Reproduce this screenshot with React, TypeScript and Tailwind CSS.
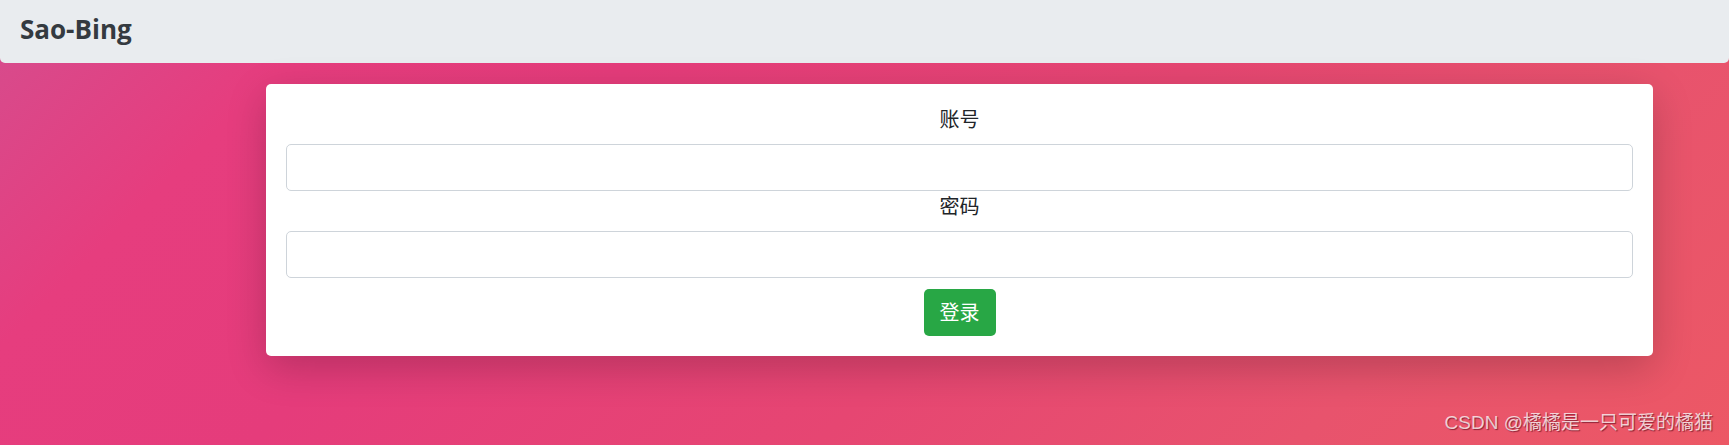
import React from "react";

function Field({ label, type }: { label: string; type: string }) {
  return (
    <div className="flex flex-col">
      <label className="mb-2 flex h-[32px] items-center justify-center text-[20px] text-[#212529]">
        {label}
      </label>
      <input
        type={type}
        className="h-[47px] w-full rounded-[5px] border border-[#ced4da] bg-white px-3 outline-none"
      />
    </div>
  );
}

export default function App() {
  return (
    <div className="relative h-[445px] w-full overflow-hidden bg-[linear-gradient(-45deg,#ec5865_0%,#e8536d_20%,#e64672_42%,#e53c7b_68%,#e63d7e_84%,#d54d8e_100%)] font-['Open_Sans','Noto_Sans_CJK_SC',sans-serif]">
      <nav className="flex h-[63px] items-center rounded-b-[5px] bg-[#e9ecef] px-5 pb-1">
        <span className="text-[26px] font-bold text-[#343a40]">Sao-Bing</span>
      </nav>

      <div className="pl-[266px] pr-[76px] pt-[21px]">
        <form className="flex flex-col rounded-[5px] bg-white p-5 shadow-[0_12px_40px_rgba(0,0,0,0.2)]">
          <Field label="账号" type="text" />
          <Field label="密码" type="password" />
          <div className="mt-[11px] flex justify-center">
            <button
              type="button"
              className="h-[47px] w-[72px] rounded-[5px] bg-[#28a745] text-[20px] text-white"
            >
              登录
            </button>
          </div>
        </form>
      </div>

      <div className="absolute bottom-[8px] right-[16px] font-['Liberation_Sans','Noto_Sans_CJK_SC',sans-serif] text-[19px] text-white/75 [text-shadow:1px_1px_1px_rgba(80,0,20,0.6)]">
        CSDN @橘橘是一只可爱的橘猫
      </div>
    </div>
  );
}
